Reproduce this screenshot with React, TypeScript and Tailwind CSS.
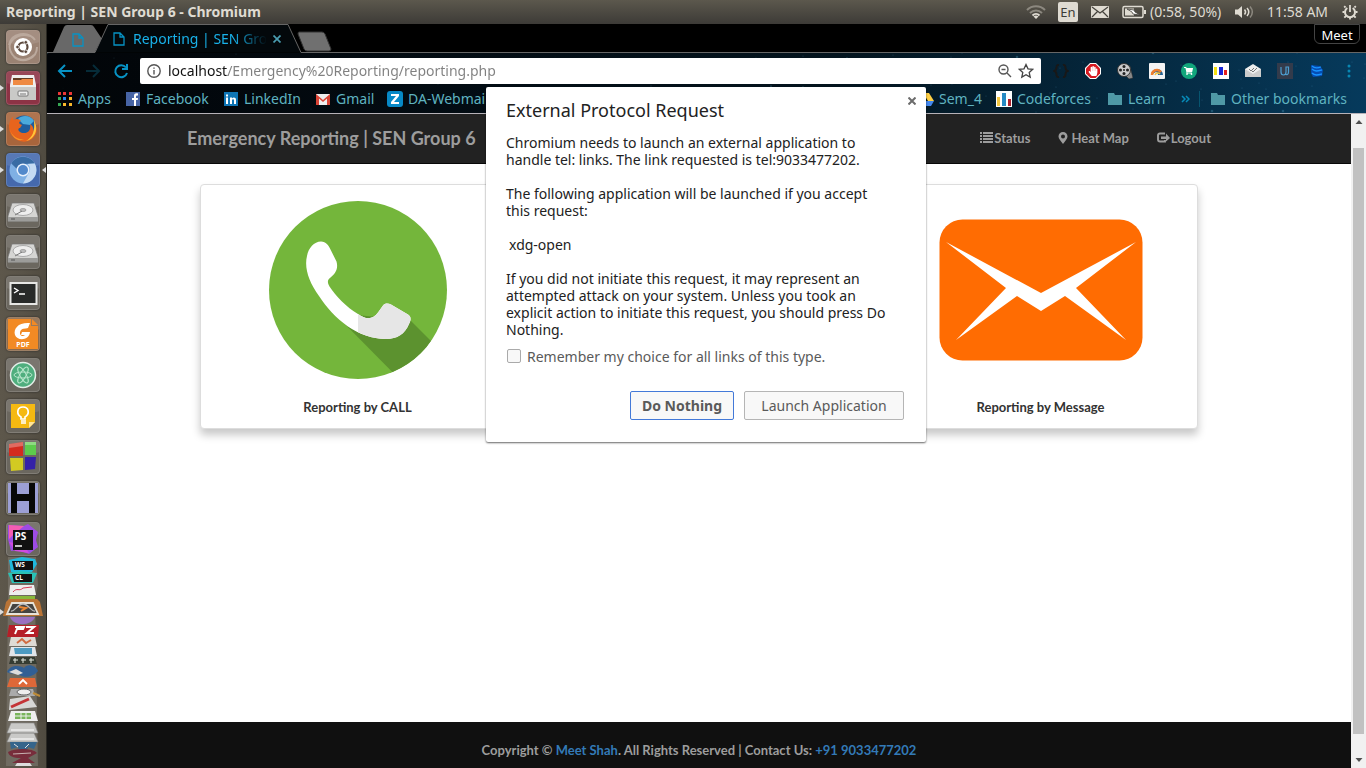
import type { ReactNode } from "react";
import { FaHandPaper, FaShoppingCart } from "react-icons/fa";

const ui = "font-['Noto_Sans','Open_Sans',sans-serif]";

/* ---------- System panel ---------- */

function SystemPanel() {
  return (
    <header className="flex h-6 shrink-0 items-center justify-between bg-linear-to-b from-[#5c584d] to-[#3d3b37] pr-2 pl-1.5 text-[#dfdbd2]">
      <h1 className="text-sm leading-6 font-bold">Reporting | SEN Group 6 - Chromium</h1>
      <div className="flex items-center text-sm leading-6">
        <svg className="mr-3 h-4 w-5" viewBox="0 0 20 16" fill="none" strokeWidth="2">
          <path d="M1 6c5-5 13-5 18 0" stroke="#8c887f" />
          <path d="M4 9c3.500-3.500 8.500-3.500 12 0" stroke="#8c887f" />
          <path d="M6.500 11.500c2-2 5-2 7 0" stroke="#dfdbd2" />
          <path d="M10 15l-2.500-2.500c1.500-1.300 3.500-1.300 5 0z" fill="#dfdbd2" />
        </svg>
        <span className="mr-3 flex h-5 w-5 items-center justify-center rounded-xs bg-[#dfdbd2] text-[13px] text-[#3c3b37]">En</span>
        <svg className="mr-3 h-3 w-5" viewBox="0 0 20 12">
          <rect x="1" width="18" height="12" rx="1" fill="#dfdbd2" />
          <path d="M2 1l8 6 8-6M2 11l5.500-5.500M18 11l-5.500-5.500" fill="none" stroke="#45433d" strokeWidth="1.200" />
        </svg>
        <svg className="mr-1 h-4 w-6" viewBox="0 0 24 16">
          <rect x="1" y="2.500" width="20" height="11" rx="1.500" fill="none" stroke="#dfdbd2" strokeWidth="1.500" />
          <rect x="22" y="6" width="2" height="4" fill="#dfdbd2" />
          <rect x="3" y="4.500" width="9" height="7" fill="#dfdbd2" />
          <path d="M5 5l7 1 1 2 5 3-7-1-1-2z" fill="#fff" stroke="#45433d" strokeWidth=".8" />
        </svg>
        <span className="w-[85px]">(0:58, 50%)</span>
        <svg className="mr-3 h-4 w-5" viewBox="0 0 20 16" fill="none" strokeWidth="1.500">
          <path d="M0 5.500h3L7 2v12l-4-3.500H0z" fill="#dfdbd2" />
          <path d="M9.500 5.500c1.300 1.500 1.300 3.500 0 5M12 4c2.200 2.500 2.200 5.500 0 8" stroke="#dfdbd2" />
          <path d="M15 2.500c3 3.500 3 7.500 0 11" stroke="#8c887f" />
        </svg>
        <time className="w-[75px]">11:58 AM</time>
        <svg className="h-4 w-4" viewBox="0 0 16 16" fill="none" stroke="#dfdbd2">
          <path d="M5.300 4A5 5 0 1 0 10.700 4" strokeWidth="2" />
          <path d="M8 1v7" strokeWidth="1.800" />
          <path d="M3.500 3.500l-1.300-1.300M12.500 3.500l1.300-1.300M2.500 8H.5M13.500 8h2M4 12l-1.700 1.700M12 12l1.700 1.700M8 13v2.500" strokeWidth="1.800" />
        </svg>
      </div>
    </header>
  );
}

/* ---------- Launcher ---------- */

function Drive() {
  return (
    <>
      <path d="M6 9h22l4 13v5H2v-5z" fill="#d5d5d3" stroke="#777" strokeWidth=".7" />
      <path d="M2 23h30v4.500H2z" fill="#9c9c9a" />
      <ellipse cx="17" cy="16" rx="10" ry="5.500" fill="#eee" stroke="#aaa" />
      <ellipse cx="17" cy="16" rx="3" ry="1.600" fill="#bbb" stroke="#888" strokeWidth=".6" />
      <path d="M9 21l7-4" stroke="#777" />
      <path d="M5 25h4" stroke="#555" />
    </>
  );
}

type Tile = { name: string; tone: string; art: ReactNode; running?: boolean };

const tiles: Tile[] = [
  {
    name: "Dash",
    tone: "bg-[#9a8273]",
    art: (
      <>
        <path d="M3 15C5 3 22 0 29 10M31 17c0 12-14 17-23 10M6 24C-2 12 12 2 24 6M28 25c-8 8-20 5-23-3" fill="none" stroke="#bba99d" strokeWidth="2" />
        <circle cx="17" cy="17" r="9" fill="#fff" />
        <circle cx="17" cy="17" r="4.500" fill="none" stroke="#5b483d" strokeWidth="2.200" />
        <g fill="#5b483d" stroke="#fff" strokeWidth=".8">
          <circle cx="11.500" cy="17" r="1.800" />
          <circle cx="19.800" cy="12.300" r="1.800" />
          <circle cx="19.800" cy="21.700" r="1.800" />
        </g>
      </>
    ),
  },
  {
    name: "Files",
    tone: "bg-[#8d3345]",
    running: true,
    art: (
      <>
        <path d="M6 4h22l2 10H4z" fill="#eee" />
        <path d="M7 7h20v3H7z" fill="#633c24" />
        <path d="M7 9h8l1-1h11v6H7z" fill="#ef8a43" />
        <path d="M4 14h26v15H4z" fill="#c9c9c7" />
        <path d="M4 14h26v2H4z" fill="#eeeeec" />
        <rect x="12" y="20" width="10" height="5" rx="1" fill="#eee" stroke="#777" />
        <path d="M14 23h6" stroke="#777" />
      </>
    ),
  },
  {
    name: "Firefox",
    tone: "bg-[#a8653c]",
    running: true,
    art: (
      <>
        <circle cx="18" cy="16" r="12.500" fill="#1f5d9e" />
        <path d="M12 7c5-5 13-3 16 2l-4 4-7-1z" fill="#4ba9dc" />
        <path d="M3 15c0-5 2-9 4-10v3c3-2 7-1 8 1-3 1-2 3 1 4l-2 3c-3 0-2 5 4 5 5 0 7-4 6-9 3 2 4 5 3 7 2-2 2-6 1-9 4 5 4 12-2 17C16 34 3 26 3 15z" fill="#e8641d" />
        <path d="M28 8c5 9 1 19-8 21 7-4 9-10 8-21z" fill="#ffc439" />
        <path d="M4 15c0 8 7 13 14 12-6 4-14-3-14-12z" fill="#f89827" />
      </>
    ),
  },
  {
    name: "Chromium",
    tone: "bg-[#4569ad]",
    running: true,
    art: (
      <>
        <circle cx="17" cy="17" r="13.500" fill="#7fb0e4" />
        <path d="M5.300 10.500A13.500 13.500 0 0 1 28.700 10.500L17 11a6 6 0 0 0-6 5z" fill="#396ca4" />
        <path d="M28.700 10.500A13.500 13.500 0 0 1 17 30.500l5.500-10a6.500 6.500 0 0 0-1-9.500z" fill="#c5dbf3" />
        <circle cx="17" cy="17" r="6.500" fill="#e8f1fc" />
        <circle cx="17" cy="17" r="5" fill="#5289cb" />
      </>
    ),
  },
  { name: "Data volume", tone: "bg-[#6b675f]", art: <Drive /> },
  { name: "Backup volume", tone: "bg-[#6b675f]", art: <Drive /> },
  {
    name: "Terminal",
    tone: "bg-[#6b675f]",
    art: (
      <>
        <rect x="4.500" y="7" width="26" height="21" fill="#282a29" stroke="#e6e6e4" strokeWidth="2" />
        <path d="M8 12l4 2.500L8 17M13 18h6" fill="none" stroke="#fff" strokeWidth="1.400" />
      </>
    ),
  },
  {
    name: "Foxit Reader",
    tone: "bg-[#8d6a4b]",
    art: (
      <>
        <path d="M2 2h23v7h7v23H2z" fill="#f28a24" />
        <path d="M26 2l6 6h-6z" fill="#f28a24" />
        <path d="M24 6c-11-1-17 5-15 12 2 6 14 6 15-3h-8l-1 3h4c-3 3-7-1-4-5 2-2 4-1 7-2z" fill="#fff" />
        <text x="17" y="30" textAnchor="middle" fontSize="7" fontWeight="700" fill="#fff">PDF</text>
      </>
    ),
  },
  {
    name: "Atom",
    tone: "bg-[#6b675f]",
    art: (
      <>
        <circle cx="17" cy="17" r="12.500" fill="#4fae7e" stroke="#e3eee8" strokeWidth="1.500" />
        <g fill="none" stroke="#b7e6cb">
          <ellipse cx="17" cy="17" rx="9" ry="3" />
          <ellipse cx="17" cy="17" rx="9" ry="3" transform="rotate(60 17 17)" />
          <ellipse cx="17" cy="17" rx="9" ry="3" transform="rotate(120 17 17)" />
        </g>
      </>
    ),
  },
  {
    name: "Keep",
    tone: "bg-[#6b675f]",
    art: (
      <>
        <path d="M5 5h24v18l-6 6H5z" fill="#f5b912" />
        <path d="M29 23l-6 6v-6z" fill="#ffe59a" />
        <path d="M15 20v-2c-5-3-4-10 2-10s7 7 2 10v2zM15 22h5M15 24h5" fill="none" stroke="#fff" strokeWidth="1.700" />
      </>
    ),
  },
  {
    name: "Code::Blocks",
    tone: "bg-[#6b675f]",
    art: (
      <>
        <path d="M3 4l14-2v14H3z" fill="#d32b1e" />
        <path d="M19 2h11v13H19z" fill="#5dcb4c" />
        <path d="M4 18h13v12L5 31z" fill="#d2ca22" />
        <path d="M19 17h11l-1 12-10 1z" fill="#3521a8" />
        <path d="M3 4l14-2v4L3 8zM19 2h11v3H19z" fill="#fff" opacity=".3" />
      </>
    ),
  },
  {
    name: "Hex editor",
    tone: "bg-[#6b675f]",
    art: (
      <>
        <path d="M2 2h30v30H2z" fill="#9c9fd5" />
        <path d="M5 2h6v11h12V2h6v30h-6V20H11v12H5z" fill="#080808" />
      </>
    ),
  },
  {
    name: "PhpStorm",
    tone: "bg-[#6b675f]",
    art: (
      <>
        <path d="M2 3l16 1 4-2 10 8-2 8 2 7-9 7-11-4-7 1-3-12z" fill="#9d4be4" />
        <path d="M3 3l15 1-12 10-3 3z" fill="#f35db2" />
        <path d="M3 20l6 9 14 2-5-8z" fill="#d04ce0" />
        <path d="M7 8h20v20H7z" fill="#111" />
        <text x="8.500" y="18" fontSize="10" fontWeight="700" fill="#fff">PS</text>
        <path d="M9 24h7" stroke="#fff" strokeWidth="1.500" />
      </>
    ),
  },
];

function FoldedTiles() {
  return (
    <svg className="h-[209px] w-10 shrink-0" viewBox="0 0 40 209">
      <path d="M5 0h28l2 28-3 12 3 169H3L5 40z" fill="#817d75" opacity=".55" />
      <path d="M6 3l13-3 13 2 2 5-5 8H8z" fill="#20b8dc" />
      <path d="M9 4h21v9H11z" fill="#111" />
      <text x="12" y="9.500" fontSize="6.500" fontWeight="700" fill="#fff">WS</text>
      <path d="M5 16l12-2 17 2-4 10H9z" fill="#2ac1b5" />
      <path d="M9 17h20v8H11z" fill="#111" />
      <text x="12" y="22.500" fontSize="6.500" fontWeight="700" fill="#fff">CL</text>
      <path d="M7 28h24l2 10H6z" fill="#eee" />
      <path d="M10 35c4-5 6 0 10-4l9-1" stroke="#d63f57" fill="none" />
      <path d="M7 39h25v5H6z" fill="#88b83c" />
      <path d="M3 45l3-3h28l3 3 3 14H0z" fill="#b97436" />
      <path d="M9 46h21l5 11H4z" fill="#454441" stroke="#e7e3d9" strokeWidth="1.800" />
      <path d="M8 54c4 1 6-7 12-7s8 8 12 7" fill="none" stroke="#bbb" strokeWidth="1.300" />
      <path d="M16 50l7 1-5 3" stroke="#eb8732" fill="none" strokeWidth="2" />
      <path d="M7 60h25c-3 9-21 10-25 0z" fill="#9a70c1" />
      <path d="M6 68h30l-1 12H4z" fill="#b51f28" />
      <path d="M12 70h9l-1 2h-6l-2 5M23 70h8l-7 6h7" stroke="#fff" fill="none" strokeWidth="2" />
      <path d="M8 80h24l2 9H6z" fill="#dedbd5" />
      <path d="M14 86l5-4 4 4 5-3" stroke="#d06b41" strokeWidth="2" fill="none" />
      <path d="M8 90h24l2 9H6z" fill="#e1e5e9" />
      <path d="M11 91h18v6H12z" fill="#4c9ac1" />
      <path d="M8 100h24l2 7H6z" fill="#353c32" />
      <path d="M10 103h5m3 0h5m3 0h5M12 101v5m8-5v5m8-5v5" stroke="#e2e6dc" />
      <path d="M4 115c3-7 12-7 17-4 3-5 12-3 14 3-5 7-18 8-21 1-3 2-6 2-10 0z" fill="#315f94" />
      <path d="M6 115l7-3 7 4-5 2z" fill="#ddd" />
      <path d="M7 121h25l2 9H4z" fill="#df6838" />
      <path d="M16 127l4-4 4 4" stroke="#fff" fill="none" strokeWidth="1.800" />
      <path d="M8 132h22l2 7H6z" fill="#aaa" />
      <ellipse cx="21" cy="135" rx="7" ry="3" fill="#eee" stroke="#666" />
      <path d="M30 136l7 3" stroke="#be8b36" strokeWidth="2" />
      <path d="M7 142l20-3 7 11-28 3z" fill="#d7d7d5" />
      <path d="M8 150l18-8" stroke="#c43437" strokeWidth="3" />
      <path d="M8 154h24l3 10H5z" fill="#eee" />
      <path d="M12 156h16v6H12z" fill="#79b45c" />
      <path d="M18 156v6m5-6v6M12 159h16" stroke="#eee" />
      <path d="M8 166h23l4 10H4zM8 176h23l4 9H4z" fill="#c9c9c7" stroke="#888" strokeWidth=".6" />
      <path d="M8 173h23M8 182h23" stroke="#eee" strokeWidth="1.500" />
      <path d="M7 185h27l-3 7-6-2-2 7h-6l-2-7-7 2z" fill="#36658b" />
      <path d="M11 187l4 3m11-3l-4 4" stroke="#e2e2e2" />
      <path d="M5 195c10-5 26-3 29 1l-9 5 7 5H9l9-5c-8 0-12-2-13-6z" fill="#772d3b" />
      <path d="M10 197l18-1" stroke="#c8b3b2" />
      <path d="M14 206h13l2 3H12z" fill="#ddd" />
    </svg>
  );
}

function Launcher() {
  return (
    <nav aria-label="Launcher" className="flex w-[47px] shrink-0 flex-col items-center gap-[7px] overflow-hidden border-r border-[#2a2822] bg-linear-to-r from-[#5d574b] via-[#595348] to-[#504b40] pt-1.5">
      {tiles.map((t) => (
        <div key={t.name} className="relative flex w-full shrink-0 justify-center">
          {t.running && <span className="absolute top-3.5 left-0 border-y-3 border-l-4 border-y-transparent border-l-[#ddd]" />}
          {t.name === "Chromium" && <span className="absolute top-3.5 right-0 border-y-3 border-r-4 border-y-transparent border-r-[#ddd]" />}
          <button type="button" aria-label={t.name} className={`h-[34px] w-[34px] overflow-hidden rounded-sm border border-white/15 shadow-[0_0_2px_#222] ${t.tone}`}>
            <svg className="h-full w-full" viewBox="1 1 32 32">
              <path d="M0 0h34v12Q17 18 0 12z" fill="#fff" opacity=".1" />
              {t.art}
            </svg>
          </button>
        </div>
      ))}
      <div className="relative -mt-1.5 flex w-full justify-center">
        <span className="absolute top-[52px] left-0 border-y-3 border-l-4 border-y-transparent border-l-[#ddd]" />
        <FoldedTiles />
      </div>
    </nav>
  );
}

/* ---------- Browser chrome ---------- */

function PageIcon() {
  return (
    <svg className="h-3.5 w-3 shrink-0" viewBox="0 0 12 14" fill="none" stroke="#0792c4" strokeWidth="1.300">
      <path d="M1 1h6l4 4v8H1zM7 1v4h4" />
    </svg>
  );
}

function TabStrip() {
  return (
    <div className="relative flex h-[29px] shrink-0 items-start bg-black">
      <svg className="absolute inset-0 h-[29px] w-full" preserveAspectRatio="xMinYMin slice" viewBox="0 0 1319 29">
        <path d="M6 28L17 3q1-2 3-2h24q2 0 3 2l8 12-7 13z" fill="#686868" />
        <path d="M48 28.500L61 .500h180l13 28z" fill="#03080b" />
        <path d="M0 28.500h48L61 .500h180l13 28H1319" fill="none" stroke="#666" />
        <path d="M252 8h23q2 0 3 2l6 15q0 2-2 2h-22q-2 0-3-2l-6-15q0-2 1-2z" fill="#707070" stroke="#333" />
      </svg>
      <button type="button" aria-label="First tab" className="relative mt-2 ml-[25px] h-4 w-[41px]">
        <PageIcon />
      </button>
      <div className="relative mt-[5px] flex h-5 items-center text-sm text-[#19b1e9]">
        <PageIcon />
        <span className="ml-2 w-[134px] overflow-hidden mask-r-from-75% whitespace-nowrap">Reporting | SEN Group 6</span>
        <button type="button" aria-label="Close tab" className="ml-1.5 flex h-4 w-4 items-center">
          <svg className="h-2 w-2" viewBox="0 0 8 8" stroke="#4a9cb0" strokeWidth="1.700"><path d="M.5.500l7 7M7.500.500l-7 7" /></svg>
        </button>
      </div>
      <button type="button" className="relative mr-1.5 ml-auto h-5 w-[46px] rounded-b-md border border-[#444] text-[13px] leading-5 text-white">Meet</button>
    </div>
  );
}

const extensions: { name: string; art: ReactNode }[] = [
  { name: "JSON viewer", art: <path d="M6 2C2 1 5 7 1.500 8 5 9 2 15 6 14M10 2c4-1 1 5 4.500 6C11 9 14 15 10 14" fill="none" stroke="#181818" strokeWidth="2" /> },
  {
    name: "Ad blocker",
    art: (
      <>
        <path d="M5 0h6l5 5v6l-5 5H5l-5-5V5z" fill="#fff" />
        <path d="M5.400 1h5.200L15 5.400v5.200L10.600 15H5.400L1 10.600V5.400z" fill="#d71920" />
        <FaHandPaper x="3" y="3" size={10} color="#fff" />
      </>
    ),
  },
  {
    name: "Movies",
    art: (
      <>
        <path d="M9 1l4 2 3 12-4 1-3-3z" fill="#888" stroke="#222" strokeWidth=".5" />
        <circle cx="7" cy="7" r="6.500" fill="#ccc" stroke="#333" />
        <g fill="#222"><circle cx="7" cy="7" r="1" /><circle cx="7" cy="3.500" r="1.500" /><circle cx="3.500" cy="7" r="1.500" /><circle cx="10.500" cy="7" r="1.500" /><circle cx="7" cy="10.500" r="1.500" /></g>
      </>
    ),
  },
  {
    name: "Rainbow",
    art: (
      <>
        <rect width="16" height="16" rx="1" fill="#f4f4f4" />
        <path d="M2 12a6 6 0 0 1 12 0h-5a3 3 0 0 0-2-3z" fill="#276495" />
        <path d="M3 12a5 5 0 0 1 9-3" fill="none" stroke="#ef7e2d" strokeWidth="2.500" />
        <path d="M6 12a3 3 0 0 1 5-1" fill="none" stroke="#f5c23c" strokeWidth="1.500" />
      </>
    ),
  },
  { name: "Shopping", art: <><circle cx="8" cy="8" r="8" fill="#12a67c" /><FaShoppingCart x="3" y="3.500" size={9} color="#fff" /></> },
  { name: "Contests", art: <><path d="M0 0h16v16H0z" fill="#fff" /><path d="M1 4h3v8H1z" fill="#f5df13" /><path d="M6 4h4v8H6z" fill="#1624d8" /><path d="M11 7h3v5h-3z" fill="#e32020" /></> },
  { name: "Mail tracker", art: <><path d="M0 6l8-5 8 5v8H0z" fill="#eee" /><path d="M0 6l8 5 8-5v8H0z" fill="#ccc" /><path d="M4 6l2 2 3-3M7 8l1 1 4-4" fill="none" stroke="#777" /></> },
  { name: "Udacity", art: <><path d="M0 0h16v16H0z" fill="#333b4b" /><path d="M4 4v5c0 4 5 4 5 0V4h2.500v5c0 3-2 3-3 2" fill="none" stroke="#4d9ed0" strokeWidth="1.200" /></> },
  { name: "Database", art: <><path d="M2 2l9 1 3 4-1 6-9 1-2-4z" fill="#064db1" /><path d="M3 3c3 3 6 2 9 1M3 6c3 3 6 2 10 1M3 10c3 3 6 2 10 1" fill="none" stroke="#1894ff" strokeWidth="1.300" /></> },
  { name: "Menu", art: <g fill="#0988b4"><circle cx="8" cy="3" r="1.500" /><circle cx="8" cy="8" r="1.500" /><circle cx="8" cy="13" r="1.500" /></g> },
];

function Toolbar() {
  return (
    <div className="flex h-8 items-center">
      <div className="flex w-[93px] shrink-0 items-center gap-3 pl-2.5">
        {[
          { name: "Back", color: "#0792c4", d: "M15 8H2M8 2L2 8l6 6" },
          { name: "Forward", color: "#062c39", d: "M1 8h13M8 2l6 6-6 6" },
          { name: "Reload", color: "#0792c4", d: "M13 4.500A6 6 0 1 0 14 10M14 1v5H9" },
        ].map((b) => (
          <button key={b.name} type="button" aria-label={b.name} className="h-4 w-4">
            <svg className="h-4 w-4" viewBox="0 0 16 16" fill="none" stroke={b.color} strokeWidth="2"><path d={b.d} /></svg>
          </button>
        ))}
      </div>
      <div className="flex h-[26px] min-w-0 flex-1 items-center rounded-xs bg-white px-[7px]">
        <svg className="h-3.5 w-3.5 shrink-0" viewBox="0 0 14 14" fill="none" stroke="#555" strokeWidth="1.400"><circle cx="7" cy="7" r="6.200" /><path d="M7 6v4.500M7 3.500v1.300" /></svg>
        <input
          aria-label="Address"
          className="ml-[7px] min-w-0 flex-1 bg-[linear-gradient(90deg,#111_60px,#808080_60px)] bg-clip-text text-sm leading-5 text-transparent outline-none"
          defaultValue="localhost/Emergency%20Reporting/reporting.php"
        />
        <svg className="mr-1.5 h-3.5 w-3.5" viewBox="0 0 14 14" fill="none" stroke="#555" strokeWidth="1.400"><circle cx="5.500" cy="5.500" r="4.500" /><path d="M9 9l4 4M3.500 5.500h4" /></svg>
        <svg className="h-4 w-4" viewBox="0 0 16 16" fill="none" stroke="#444" strokeWidth="1.300"><path d="M8 1.500l2 4.300 4.700.5-3.500 3.200 1 4.600L8 11.700l-4.200 2.400 1-4.600-3.500-3.200 4.700-.5z" /></svg>
      </div>
      <div className="flex shrink-0 pr-px pl-1">
        {extensions.map((e) => (
          <button key={e.name} type="button" aria-label={e.name} className="flex h-4 w-8 justify-center">
            <svg className="h-4 w-4" viewBox="0 0 16 16">{e.art}</svg>
          </button>
        ))}
      </div>
    </div>
  );
}

const folder = <path d="M1 2h6l1 2h7v10H1z" fill="#4f99a6" />;

const leftMarks = [
  { name: "Apps", width: "w-[68px]", art: <><path d="M1 1h3v3H1zM6 1h3v3H6zM12 1h3v3h-3z" fill="#ed3737" /><path d="M1 6h3v3H1z" fill="#36a854" /><path d="M6 6h3v3H6z" fill="#2988e8" /><path d="M12 6h3v3h-3zM6 12h3v3H6zM12 12h3v3h-3z" fill="#f9b82b" /><path d="M1 12h3v3H1z" fill="#36a854" /></> },
  { name: "Facebook", width: "w-[98px]", art: <><path d="M1 1h14v14H1z" fill="#4764a5" /><path d="M9 15V9H7V7h2V5c0-2 1-3 4-2.500v2c-2 0-2 0-2 2.500h2l-.3 2H11v6z" fill="#fff" /></> },
  { name: "LinkedIn", width: "w-[92px]", art: <><path d="M1 1h14v14H1z" fill="#0e75b5" /><path d="M3 6.500h2V13H3zM3 3.500h2v2H3zM7 6.500h2v1c1-1.500 4-1.500 4 1.500v4h-2V9.500c0-2-2-1.500-2 0V13H7z" fill="#fff" /></> },
  { name: "Gmail", width: "w-[72px]", art: <><path d="M1 3h14v11H1z" fill="#eee" /><path d="M1 14V3l7 6 7-6v11h-3V7.500L8 11 4 7.500V14z" fill="#d94335" /></> },
  { name: "DA-Webmail", width: "w-[110px]", art: <><rect width="16" height="16" rx="3" fill="#0789c7" /><path d="M4 3h8v2l-5 6h5v2H4v-2l5-6H4z" fill="#fff" /></> },
];

const rightMarks = [
  { name: "Sem_4", width: "w-[78px]", art: <><path d="M5 2h6l5 8h-6z" fill="#ffcf45" /><path d="M5 2l3 5-5 8-3-5z" fill="#159f5c" /><path d="M6 10h10l-3 5H3z" fill="#4387ed" /></> },
  { name: "Codeforces", width: "w-[111px]", art: <><path d="M0 0h16v16H0z" fill="#fff" /><path d="M1 6h3v9H1z" fill="#f4c842" /><path d="M6 2h4v13H6z" fill="#268ac4" /><path d="M12 8h3v7h-3z" fill="#ad202c" /></> },
  { name: "Learn", width: "w-[74px]", art: folder },
];

function Bookmark({ name, width, art }: { name: string; width: string; art: ReactNode }) {
  return (
    <a href="#bookmark" className={`flex shrink-0 items-center gap-[5px] whitespace-nowrap ${width}`}>
      <svg className="h-4 w-4 shrink-0" viewBox="0 0 16 16">{art}</svg>
      {name}
    </a>
  );
}

function BookmarkBar() {
  return (
    <div className="flex h-[26px] items-center justify-between pr-1 pb-[3px] pl-2.5 text-sm text-[#5fb3c0]">
      <div className="flex">{leftMarks.map((m) => <Bookmark key={m.name} {...m} />)}</div>
      <div className="flex items-center">
        {rightMarks.map((m) => <Bookmark key={m.name} {...m} />)}
        <button type="button" aria-label="More bookmarks" className="h-4 w-[18px]">
          <svg className="h-4 w-[9px]" viewBox="0 0 9 16" fill="none" stroke="#078bb9" strokeWidth="1.500"><path d="M1 5l3 3-3 3M5 5l3 3-3 3" /></svg>
        </button>
        <span className="mr-2.5 h-4 w-px bg-[#07556f]" />
        <Bookmark name="Other bookmarks" width="w-[152px]" art={folder} />
      </div>
    </div>
  );
}

const stars = Array.from({ length: 150 }, (_, i) => ({
  x: (i * 397 + ((i * i * 13) % 89)) % 1319,
  y: (i * 29 + ((i * i) % 17)) % 60,
  r: i % 11 === 0 ? 1.3 : 0.6,
  o: i % 5 === 0 ? 0.7 : 0.25,
}));

function BrowserBars() {
  return (
    <div className="relative shrink-0 border-b border-[#b6b2b8] bg-linear-to-r from-[#020508] via-[#03141e] via-60% to-[#063a5c]">
      <svg className="absolute inset-0 h-full w-full" viewBox="0 0 1319 60" preserveAspectRatio="xMaxYMid slice">
        {stars.map((s, i) => <circle key={i} cx={s.x} cy={s.y} r={s.r} fill="#6ac0df" opacity={s.x < 700 ? s.o / 4 : s.o} />)}
      </svg>
      <div className="relative pt-0.5">
        <Toolbar />
        <BookmarkBar />
      </div>
    </div>
  );
}

/* ---------- Web page ---------- */

function PageNav() {
  return (
    <nav className="flex h-[50px] shrink-0 items-center justify-between border-b border-[#080808] bg-[#222] px-[140px] pb-0.5 text-[#9d9d9d]">
      <a href="#home" className="text-lg leading-6 font-bold">Emergency Reporting | SEN Group 6</a>
      <div className="flex gap-7 text-[13px] leading-5 font-bold">
        <a href="#status" className="flex items-center gap-px">
          <svg className="h-3 w-[13px]" viewBox="0 0 13 12" fill="#9d9d9d"><path d="M0 0h2v2H0zM0 3h2v2H0zM0 6h2v2H0zM0 9h2v2H0zM3 0h10v2H3zM3 3h10v2H3zM3 6h10v2H3zM3 9h10v2H3z" /></svg>
          Status
        </a>
        <a href="#heat-map" className="flex items-center gap-[3px]">
          <svg className="h-3 w-2.5" viewBox="0 0 10 12" fill="#9d9d9d" fillRule="evenodd"><path d="M5 0a4.500 4.500 0 0 1 4.500 4.500C9.500 7 7 9 5 12 3 9 .5 7 .5 4.500A4.500 4.500 0 0 1 5 0zm0 2.500a2 2 0 1 0 0 4 2 2 0 0 0 0-4z" /></svg>
          Heat Map
        </a>
        <a href="#logout" className="flex items-center gap-px">
          <svg className="h-3 w-[13px]" viewBox="0 0 13 12"><path d="M8 1.500H3Q1 1.500 1 3.500v4Q1 9.500 3 9.500h5V8" fill="none" stroke="#9d9d9d" strokeWidth="1.900" /><path d="M4 4.500h5v-3L13 6 9 9.500V7H4z" fill="#9d9d9d" /></svg>
          Logout
        </a>
      </div>
    </nav>
  );
}

const handset =
  "M53 41.500c5 0 7.500 3.500 10 9l5.500 11c2 7-1 12-6 16-3 2-3.500 5-1 9 6 9 17 21 28.500 27.500 8 6 15 5.500 20-1.500l5-7c2-2.500 5-2.500 8-1l17 10c3.500 2 3 6 1 9.500-4 10-12 15-23 15-28 0-52-20-67-43-10-14-15-28-12-40 1.500-8 7-14.500 14-14.500z";

function PhoneArt() {
  return (
    <svg className="h-[180px] w-[180px]" viewBox="0 0 180 180">
      <defs>
        <clipPath id="disc"><circle cx="90" cy="90" r="89" /></clipPath>
        <clipPath id="right-half"><path d="M90 0h90v180H90z" /></clipPath>
      </defs>
      <circle cx="90" cy="90" r="89" fill="#74b63b" />
      <path d="M66 113L142 120 190 168 150 198z" fill="#5c922f" clipPath="url(#disc)" />
      <path d={handset} fill="#fff" />
      <path d={handset} fill="#e6e6e6" clipPath="url(#right-half)" />
    </svg>
  );
}

function MessageArt() {
  return (
    <svg className="h-[180px] w-[204px]" viewBox="0 0 204 180">
      <rect x="0.500" y="19.500" width="203" height="141" rx="23" fill="#ff6c02" />
      <path d="M7 42l95 51 95-51-60 46 50 52-61-44-24 15-24-15-61 44 50-52z" fill="#fff" />
    </svg>
  );
}

function ReportCard({ title, children }: { title: string; children: ReactNode }) {
  return (
    <a href="#report" className="flex w-[315px] flex-col items-center rounded-sm border border-[#ddd] bg-white pt-[15px] pb-3 text-[13px] leading-[18px] font-bold text-[#333] shadow-[0_6px_8px_rgba(0,0,0,0.22)]">
      {children}
      <span className="mt-[18px]">{title}</span>
    </a>
  );
}

function WebPage() {
  return (
    <div className="flex min-h-0 flex-1 bg-white font-['Lato',sans-serif]">
      <div className="flex min-w-0 flex-1 flex-col">
        <PageNav />
        <main className="flex-1 pt-5">
          <div className="mx-auto flex w-[998px] max-w-full justify-between">
            <ReportCard title="Reporting by CALL"><PhoneArt /></ReportCard>
            <ReportCard title="Reporting by Message"><MessageArt /></ReportCard>
          </div>
        </main>
        <footer className="h-[46px] shrink-0 bg-[#101010] pt-[18px] text-center text-[13px] leading-5 font-bold text-[#9d9d9d]">
          Copyright © <a href="#author" className="text-[#337ab7]">Meet Shah</a>. All Rights Reserved | Contact Us: <a href="tel:+919033477202" className="text-[#337ab7]">+91 9033477202</a>
        </footer>
      </div>
      <div className="flex w-[15px] shrink-0 flex-col items-center bg-[#f1f1f1]">
        <svg className="h-[34px] w-3" viewBox="0 0 12 34"><path d="M2.500 10L6 6l3.500 4z" fill="#505050" /></svg>
        <div className="w-[11px] flex-1 bg-[#c1c1c1]" />
        <svg className="h-[34px] w-3" viewBox="0 0 12 34"><path d="M2.500 24L6 28l3.500-4z" fill="#505050" /></svg>
      </div>
    </div>
  );
}

/* ---------- Dialog ---------- */

function ProtocolDialog() {
  return (
    <div className="absolute inset-x-0 top-[63px] flex justify-center pr-px">
      <section role="dialog" aria-labelledby="dialog-title" className="relative w-[440px] rounded-xs bg-white px-5 pt-[11px] pb-[22px] text-sm leading-[17px] text-[#222] shadow-[0_1px_2px_rgba(0,0,0,0.6)]">
        <button type="button" aria-label="Close" className="absolute top-2.5 right-2.5 flex h-2 w-2">
          <svg className="h-2 w-2" viewBox="0 0 8 8" stroke="#6c6c6c" strokeWidth="2"><path d="M.5.500l7 7M7.500.500l-7 7" /></svg>
        </button>
        <h2 id="dialog-title" className="mb-3 text-lg leading-6">External Protocol Request</h2>
        <p className="mb-[17px] whitespace-nowrap">Chromium needs to launch an external application to<br />handle tel: links. The link requested is tel:9033477202.</p>
        <p className="mb-[17px] whitespace-nowrap">The following application will be launched if you accept<br />this request:</p>
        <p className="mb-[17px] pl-[3px]">xdg-open</p>
        <p className="mb-2 whitespace-nowrap">If you did not initiate this request, it may represent an<br />attempted attack on your system. Unless you took an<br />explicit action to initiate this request, you should press Do<br />Nothing.</p>
        <label className="flex h-5 items-center gap-[6px] text-[#5a5a5a]">
          <input type="checkbox" className="ml-px h-3.5 w-3.5 appearance-none rounded-xs border border-[#aaa] bg-[#f8f8f8]" />
          Remember my choice for all links of this type.
        </label>
        <div className="mt-[25px] flex justify-end gap-2.5 pr-0.5 text-[#5a5a5a]">
          <button type="button" className="h-[29px] w-[104px] rounded-xs border border-[#4379d8] bg-[#f8f8f8] font-bold">Do Nothing</button>
          <button type="button" className="h-[29px] w-40 rounded-xs border border-[#b5b5b5] bg-[#f8f8f8]">Launch Application</button>
        </div>
      </section>
    </div>
  );
}

export default function App() {
  return (
    <div className={`flex h-screen flex-col overflow-hidden bg-black ${ui}`}>
      <SystemPanel />
      <div className="flex min-h-0 flex-1">
        <Launcher />
        <div className="relative flex min-w-0 flex-1 flex-col">
          <TabStrip />
          <BrowserBars />
          <WebPage />
          <ProtocolDialog />
        </div>
      </div>
    </div>
  );
}
